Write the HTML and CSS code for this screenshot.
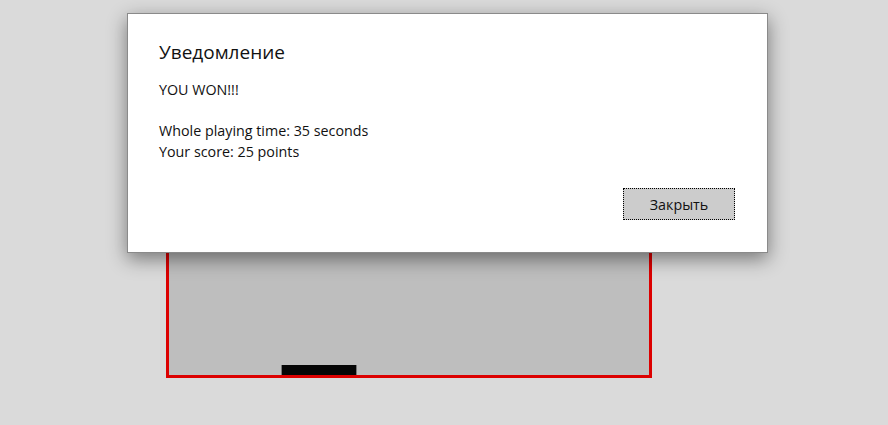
FILE: index.html
```html
<!DOCTYPE html>
<html lang="ru">
<head>
<meta charset="utf-8">
<title>Game</title>
<link rel="stylesheet" href="styles.css">
</head>
<body>
<main class="stage">
  <div class="board">
    <div class="paddle"></div>
  </div>
</main>
<div class="dialog" role="dialog">
  <h1 class="dialog-title">Уведомление</h1>
  <div class="dialog-body">
    <p class="line">YOU WON!!!</p>
    <p class="line gap">Whole playing time: 35 seconds</p>
    <p class="line">Your score: 25 points</p>
  </div>
  <div class="dialog-actions">
    <button class="btn">Закрыть</button>
  </div>
</div>
</body>
</html>
```
FILE: styles.css
```css
html, body {
  margin: 0;
  padding: 0;
  height: 100%;
  background: #dadada;
  font-family: "Open Sans", "Noto Sans", sans-serif;
  overflow: hidden;
}
.stage {
  padding-top: 60px;
  padding-left: 166px;
}
.board {
  position: relative;
  width: 480px;
  height: 312px;
  border: 3px solid #dc0000;
  background: #bebebe;
}
.paddle {
  position: absolute;
  left: 112px;
  bottom: 0;
  width: 74px;
  height: 10px;
  background: #050505;
  border-left: 1px solid #777;
  border-right: 1px solid #777;
}
.dialog {
  position: absolute;
  left: 127px;
  top: 13px;
  width: 639px;
  height: 238px;
  background: #fff;
  border: 1px solid #8a8a8a;
  box-shadow: 0 6px 18px rgba(0,0,0,0.45);
  display: flex;
  flex-direction: column;
}
.dialog-title {
  margin: 0;
  padding: 25px 32px 0 31px;
  font-size: 19px;
  font-weight: 400;
  line-height: 26px;
  color: #111;
}
.dialog-body {
  padding: 14px 32px 0 31px;
  color: #111;
  font-size: 14.3px;
  line-height: 21px;
}
.line { margin: 0; }
.gap { margin-top: 20px; }
.dialog-actions {
  display: flex;
  justify-content: flex-end;
  padding: 26px 32px 0 0;
}
.btn {
  width: 112px;
  height: 32px;
  background: #cccccc;
  border: 1px dotted #000;
  font-family: inherit;
  font-size: 14.3px;
  color: #111;
  padding: 0;
}
```
